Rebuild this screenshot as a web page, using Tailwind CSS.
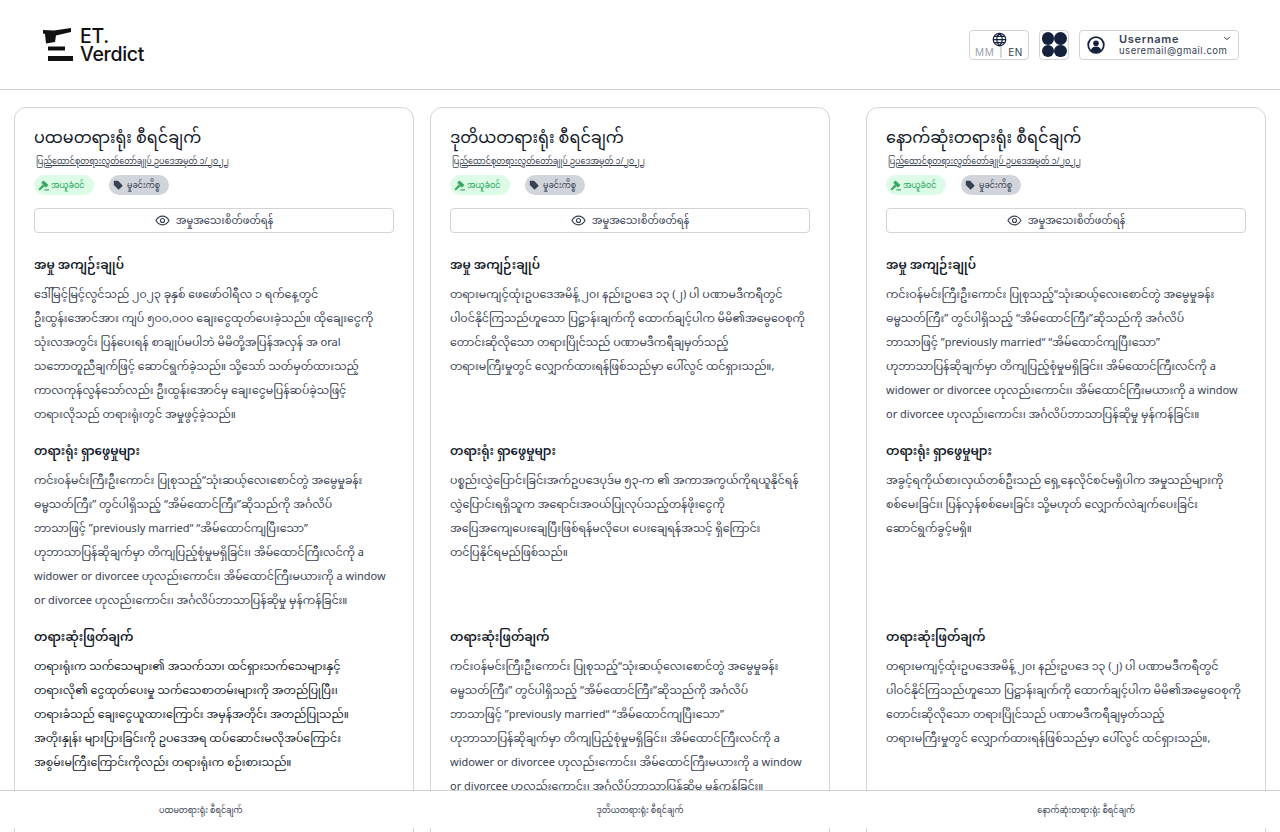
<!DOCTYPE html>
<html lang="my">
<head>
  <meta charset="UTF-8" />
  <meta name="viewport" content="width=device-width, initial-scale=1.0" />
  <title>ET. Verdict</title>
  <script src="https://cdn.jsdelivr.net/npm/@tailwindcss/browser@4"></script>
</head>
<body class="bg-white font-['Noto_Sans','Noto_Sans_Myanmar',sans-serif] text-[#1f2937]">
  <div class="relative h-[832px] w-[1280px] overflow-hidden">

    <!-- Header -->
    <header class="flex h-[90px] items-center justify-between border-b border-[#d4d4d8] pl-[43px] pr-[41px]">
      <div class="flex items-center gap-[7px]">
        <svg width="30" height="34" viewBox="0 0 30 34" fill="#111">
          <path d="M0 2 L11 2.5 L28 0 L28 4 L13 7.5 L12 14 L3 15.5 L2 6 L0 5.5 Z" />
          <rect x="5" y="18.5" width="17" height="4" />
          <rect x="5" y="28" width="25" height="5" />
        </svg>
        <div class="font-['Inter'] text-[19.5px] font-medium leading-[18px] tracking-[-0.3px] text-[#111]">ET.<br>Verdict</div>
      </div>
      <div class="flex items-center gap-[10px]">
        <button class="flex h-[30px] w-[60px] flex-col items-center justify-center rounded-[4px] border border-[#d4d4d8]">
          <svg width="15" height="15" viewBox="0 0 24 24" fill="none" stroke="#14213d" stroke-width="2">
            <circle cx="12" cy="12" r="10" />
            <path d="M2 12h20M3.5 7h17M3.5 17h17M12 2c-6 6-6 14 0 20M12 2c6 6 6 14 0 20" />
          </svg>
          <span class="whitespace-nowrap font-['Inter'] text-[10px] leading-[11px] tracking-[0.6px] text-[#9ca3af]">MM<span class="mx-[5px]">|</span><span class="text-[#374151]">EN</span></span>
        </button>
        <button class="grid h-[30px] w-[30px] grid-cols-[12.5px_12.5px] grid-rows-[12.5px_12.5px] place-content-center rounded-[4px] border border-[#d4d4d8]">
          <span class="rounded-full bg-[#14213d]"></span>
          <span class="rounded-full bg-[#14213d]"></span>
          <span class="rounded-full bg-[#14213d]"></span>
          <span class="rounded-full bg-[#14213d]"></span>
        </button>
        <button class="flex h-[30px] w-[160px] items-center rounded-[4px] border border-[#d4d4d8] pl-[7px] pr-[7px] text-left">
          <svg width="18" height="18" viewBox="0 0 18 18" fill="none">
            <circle cx="9" cy="9" r="7.8" stroke="#14213d" stroke-width="1.8" />
            <circle cx="9" cy="7.2" r="2.8" fill="#14213d" />
            <path d="M3.8 14.2c1-2.6 3-3.6 5.2-3.6s4.2 1 5.2 3.6c-1.4 1.3-3.2 2-5.2 2s-3.8-.7-5.2-2z" fill="#14213d" />
          </svg>
          <div class="ml-[14px] flex-1 font-['Inter'] text-[#374151]">
            <div class="flex items-center justify-between text-[11px] font-semibold leading-[12px] tracking-[0.7px]">
              Username
              <svg width="8" height="5" viewBox="0 0 8 5" fill="none" stroke="#4b5563" stroke-width="1"><path d="M1 1l3 2.5L7 1" /></svg>
            </div>
            <div class="text-[9.5px] leading-[12px] tracking-[0.5px]">useremail@gmail.com</div>
          </div>
        </button>
      </div>
    </header>

    <!-- Cards -->
    <main class="flex items-start pl-[14px] pt-[17px]">

      <article class="h-[800px] w-[400px] shrink-0 rounded-xl border border-[#d4d4d8] px-[19px] pt-[13px]">
        <h2 class="text-[16px] leading-[32px] text-[#111827]">ပထမတရားရုံး စီရင်ချက်</h2>
        <a class="block pl-[2px] text-[8px] leading-[16px] text-[#374151] underline">ပြည်ထောင်စုတရားလွှတ်တော်ချုပ် ဥပဒေအမှတ် ၁/၂၀၂၂</a>
        <div class="mt-[6px] flex gap-[15px]">
          <span class="flex h-[20px] w-[60px] items-center gap-[2px] rounded-full bg-[#dcfce7] pl-[4px] text-[8px] text-[#22a55a]">
            <svg width="11" height="11" viewBox="0 0 12 12" fill="#3aa862"><path d="M6 .5L11.5 5.5 8.5 8.5 3.5 3zM5 5l2 2-5 4.5L.5 10zM7 10h5v1.5H7z" /></svg>
            အယူခံဝင်
          </span>
          <span class="flex h-[20px] w-[60px] items-center gap-[4px] rounded-full bg-[#d1d5db] pl-[4px] text-[8px] text-[#374151]">
            <svg width="10" height="10" viewBox="0 0 12 12" fill="#374151"><path d="M1 1h5l5 5a1 1 0 010 1.4L7.4 11a1 1 0 01-1.4 0L1 6z" /></svg>
            မှုခင်းကိစ္စ
          </span>
        </div>
        <button class="mt-[13px] flex h-[25px] w-full items-center justify-center gap-[6px] rounded-[4px] border border-[#d4d4d8] text-[10px] text-[#374151]">
          <svg width="15" height="15" viewBox="0 0 24 24" fill="none" stroke="#374151" stroke-width="1.8"><path d="M1.5 12S5.5 5 12 5s10.5 7 10.5 7-4 7-10.5 7S1.5 12 1.5 12z" /><circle cx="12" cy="12" r="3.2" /></svg>
          အမှုအသေးစိတ်ဖတ်ရန်
        </button>
        <section class="mt-[18px] h-[186px]">
          <h3 class="text-[12px] font-semibold leading-[28px] text-[#111827]">အမှု အကျဉ်းချုပ်</h3>
          <p class="mt-[3px] whitespace-nowrap text-[11px] leading-[24px] text-[#374151]">ဒေါ်မြင့်မြင့်လွင်သည် ၂၀၂၃ ခုနှစ် ဖေဖော်ဝါရီလ ၁ ရက်နေ့တွင်<br>ဦးထွန်းအောင်အား ကျပ် ၅၀၀,၀၀၀ ချေးငွေထုတ်ပေးခဲ့သည်။ ထိုချေးငွေကို<br>သုံးလအတွင်း ပြန်ပေးရန် စာချုပ်မပါဘဲ မိမိတို့အပြန်အလှန် အ oral<br>သဘောတူညီချက်ဖြင့် ဆောင်ရွက်ခဲ့သည်။ သို့သော် သတ်မှတ်ထားသည့်<br>ကာလကုန်လွန်သော်လည်း ဦးထွန်းအောင်မှ ချေးငွေမပြန်ဆပ်ခဲ့သဖြင့်<br>တရားလိုသည် တရားရုံးတွင် အမှုဖွင့်ခဲ့သည်။</p>
        </section>
        <section class="h-[186px]">
          <h3 class="text-[12px] font-semibold leading-[28px] text-[#111827]">တရားရုံး ရှာဖွေမှုများ</h3>
          <p class="mt-[3px] whitespace-nowrap text-[11px] leading-[24px] text-[#374151]">ကင်းဝန်မင်းကြီးဦးကောင်း ပြုစုသည့်“သုံးဆယ့်လေးစောင်တွဲ အမွေမှုခန်း<br>ဓမ္မသတ်ကြီး” တွင်ပါရှိသည့် “အိမ်ထောင်ကြီး”ဆိုသည်ကို အင်္ဂလိပ်<br>ဘာသာဖြင့် ”previously married“ “အိမ်ထောင်ကျပြီးသော”<br>ဟုဘာသာပြန်ဆိုချက်မှာ တိကျပြည့်စုံမှုမရှိခြင်း၊ အိမ်ထောင်ကြီးလင်ကို a<br>widower or divorcee ဟုလည်းကောင်း၊ အိမ်ထောင်ကြီးမယားကို a window<br>or divorcee ဟုလည်းကောင်း၊ အင်္ဂလိပ်ဘာသာပြန်ဆိုမှု မှန်ကန်ခြင်း။</p>
        </section>
        <section>
          <h3 class="text-[12px] font-semibold leading-[28px] text-[#111827]">တရားဆုံးဖြတ်ချက်</h3>
          <p class="mt-[3px] whitespace-nowrap text-[11px] leading-[24px] text-[#111827]">တရားရုံးက သက်သေများ၏ အသက်သာ၊ ထင်ရှားသက်သေများနှင့်<br>တရားလို၏ ငွေထုတ်ပေးမှု သက်သေစာတမ်းများကို အတည်ပြုပြီး၊<br>တရားခံသည် ချေးငွေယူထားကြောင်း အမှန်အတိုင်း အတည်ပြုသည်။<br>အတိုးနှုန်း များပြားခြင်းကို ဥပဒေအရ ထပ်ဆောင်းမလိုအပ်ကြောင်း<br>အစွမ်းမကြီးကြောင်းကိုလည်း တရားရုံးက စဉ်းစားသည်။</p>
        </section>
      </article>

      <article class="ml-[16px] h-[800px] w-[400px] shrink-0 rounded-xl border border-[#d4d4d8] px-[19px] pt-[13px]">
        <h2 class="text-[16px] leading-[32px] text-[#111827]">ဒုတိယတရားရုံး စီရင်ချက်</h2>
        <a class="block pl-[2px] text-[8px] leading-[16px] text-[#374151] underline">ပြည်ထောင်စုတရားလွှတ်တော်ချုပ် ဥပဒေအမှတ် ၁/၂၀၂၂</a>
        <div class="mt-[6px] flex gap-[15px]">
          <span class="flex h-[20px] w-[60px] items-center gap-[2px] rounded-full bg-[#dcfce7] pl-[4px] text-[8px] text-[#22a55a]">
            <svg width="11" height="11" viewBox="0 0 12 12" fill="#3aa862"><path d="M6 .5L11.5 5.5 8.5 8.5 3.5 3zM5 5l2 2-5 4.5L.5 10zM7 10h5v1.5H7z" /></svg>
            အယူခံဝင်
          </span>
          <span class="flex h-[20px] w-[60px] items-center gap-[4px] rounded-full bg-[#d1d5db] pl-[4px] text-[8px] text-[#374151]">
            <svg width="10" height="10" viewBox="0 0 12 12" fill="#374151"><path d="M1 1h5l5 5a1 1 0 010 1.4L7.4 11a1 1 0 01-1.4 0L1 6z" /></svg>
            မှုခင်းကိစ္စ
          </span>
        </div>
        <button class="mt-[13px] flex h-[25px] w-full items-center justify-center gap-[6px] rounded-[4px] border border-[#d4d4d8] text-[10px] text-[#374151]">
          <svg width="15" height="15" viewBox="0 0 24 24" fill="none" stroke="#374151" stroke-width="1.8"><path d="M1.5 12S5.5 5 12 5s10.5 7 10.5 7-4 7-10.5 7S1.5 12 1.5 12z" /><circle cx="12" cy="12" r="3.2" /></svg>
          အမှုအသေးစိတ်ဖတ်ရန်
        </button>
        <section class="mt-[18px] h-[186px]">
          <h3 class="text-[12px] font-semibold leading-[28px] text-[#111827]">အမှု အကျဉ်းချုပ်</h3>
          <p class="mt-[3px] whitespace-nowrap text-[11px] leading-[24px] text-[#374151]">တရားမကျင့်ထုံးဥပဒေအမိန့် ၂၀၊ နည်းဥပဒေ ၁၃ (၂) ပါ ပဏာမဒီကရီတွင်<br>ပါဝင်နိုင်ကြသည်ဟူသော ပြဋ္ဌာန်းချက်ကို ထောက်ချင့်ပါက မိမိ၏အမွေဝေစုကို<br>တောင်းဆိုလိုသော တရားပြိုင်သည် ပဏာမဒီကရီချမှတ်သည့်<br>တရားမကြီးမှုတွင် လျှောက်ထားရန်ဖြစ်သည်မှာ ပေါ်လွင် ထင်ရှားသည်။,</p>
        </section>
        <section class="h-[186px]">
          <h3 class="text-[12px] font-semibold leading-[28px] text-[#111827]">တရားရုံး ရှာဖွေမှုများ</h3>
          <p class="mt-[3px] whitespace-nowrap text-[11px] leading-[24px] text-[#374151]">ပစ္စည်းလွှဲပြောင်းခြင်းအက်ဥပဒေပုဒ်မ ၅၃-က ၏ အကာအကွယ်ကိုရယူနိုင်ရန်<br>လွှဲပြောင်းရရှိသူက အရောင်းအဝယ်ပြုလုပ်သည့်တန်ဖိုးငွေကို<br>အပြေအကျေပေးချေပြီးဖြစ်ရန်မလိုပေ၊ ပေးချေရန်အသင့် ရှိကြောင်း<br>တင်ပြနိုင်ရမည်ဖြစ်သည်။</p>
        </section>
        <section>
          <h3 class="text-[12px] font-semibold leading-[28px] text-[#111827]">တရားဆုံးဖြတ်ချက်</h3>
          <p class="mt-[3px] whitespace-nowrap text-[11px] leading-[24px] text-[#374151]">ကင်းဝန်မင်းကြီးဦးကောင်း ပြုစုသည့်“သုံးဆယ့်လေးစောင်တွဲ အမွေမှုခန်း<br>ဓမ္မသတ်ကြီး” တွင်ပါရှိသည့် “အိမ်ထောင်ကြီး”ဆိုသည်ကို အင်္ဂလိပ်<br>ဘာသာဖြင့် ”previously married“ “အိမ်ထောင်ကျပြီးသော”<br>ဟုဘာသာပြန်ဆိုချက်မှာ တိကျပြည့်စုံမှုမရှိခြင်း၊ အိမ်ထောင်ကြီးလင်ကို a<br>widower or divorcee ဟုလည်းကောင်း၊ အိမ်ထောင်ကြီးမယားကို a window<br>or divorcee ဟုလည်းကောင်း၊ အင်္ဂလိပ်ဘာသာပြန်ဆိုမှု မှန်ကန်ခြင်း။</p>
        </section>
      </article>

      <article class="ml-[36px] h-[800px] w-[400px] shrink-0 rounded-xl border border-[#d4d4d8] px-[19px] pt-[13px]">
        <h2 class="text-[16px] leading-[32px] text-[#111827]">နောက်ဆုံးတရားရုံး စီရင်ချက်</h2>
        <a class="block pl-[2px] text-[8px] leading-[16px] text-[#374151] underline">ပြည်ထောင်စုတရားလွှတ်တော်ချုပ် ဥပဒေအမှတ် ၁/၂၀၂၂</a>
        <div class="mt-[6px] flex gap-[15px]">
          <span class="flex h-[20px] w-[60px] items-center gap-[2px] rounded-full bg-[#dcfce7] pl-[4px] text-[8px] text-[#22a55a]">
            <svg width="11" height="11" viewBox="0 0 12 12" fill="#3aa862"><path d="M6 .5L11.5 5.5 8.5 8.5 3.5 3zM5 5l2 2-5 4.5L.5 10zM7 10h5v1.5H7z" /></svg>
            အယူခံဝင်
          </span>
          <span class="flex h-[20px] w-[60px] items-center gap-[4px] rounded-full bg-[#d1d5db] pl-[4px] text-[8px] text-[#374151]">
            <svg width="10" height="10" viewBox="0 0 12 12" fill="#374151"><path d="M1 1h5l5 5a1 1 0 010 1.4L7.4 11a1 1 0 01-1.4 0L1 6z" /></svg>
            မှုခင်းကိစ္စ
          </span>
        </div>
        <button class="mt-[13px] flex h-[25px] w-full items-center justify-center gap-[6px] rounded-[4px] border border-[#d4d4d8] text-[10px] text-[#374151]">
          <svg width="15" height="15" viewBox="0 0 24 24" fill="none" stroke="#374151" stroke-width="1.8"><path d="M1.5 12S5.5 5 12 5s10.5 7 10.5 7-4 7-10.5 7S1.5 12 1.5 12z" /><circle cx="12" cy="12" r="3.2" /></svg>
          အမှုအသေးစိတ်ဖတ်ရန်
        </button>
        <section class="mt-[18px] h-[186px]">
          <h3 class="text-[12px] font-semibold leading-[28px] text-[#111827]">အမှု အကျဉ်းချုပ်</h3>
          <p class="mt-[3px] whitespace-nowrap text-[11px] leading-[24px] text-[#374151]">ကင်းဝန်မင်းကြီးဦးကောင်း ပြုစုသည့်“သုံးဆယ့်လေးစောင်တွဲ အမွေမှုခန်း<br>ဓမ္မသတ်ကြီး” တွင်ပါရှိသည့် “အိမ်ထောင်ကြီး”ဆိုသည်ကို အင်္ဂလိပ်<br>ဘာသာဖြင့် ”previously married“ “အိမ်ထောင်ကျပြီးသော”<br>ဟုဘာသာပြန်ဆိုချက်မှာ တိကျပြည့်စုံမှုမရှိခြင်း၊ အိမ်ထောင်ကြီးလင်ကို a<br>widower or divorcee ဟုလည်းကောင်း၊ အိမ်ထောင်ကြီးမယားကို a window<br>or divorcee ဟုလည်းကောင်း၊ အင်္ဂလိပ်ဘာသာပြန်ဆိုမှု မှန်ကန်ခြင်း။</p>
        </section>
        <section class="h-[186px]">
          <h3 class="text-[12px] font-semibold leading-[28px] text-[#111827]">တရားရုံး ရှာဖွေမှုများ</h3>
          <p class="mt-[3px] whitespace-nowrap text-[11px] leading-[24px] text-[#374151]">အခွင့်ရကိုယ်စားလှယ်တစ်ဦးသည် ရှေ့နေလိုင်စင်မရှိပါက အမှုသည်များကို<br>စစ်မေးခြင်း၊ ပြန်လှန်စစ်မေးခြင်း သို့မဟုတ် လျှောက်လဲချက်ပေးခြင်း<br>ဆောင်ရွက်ခွင့်မရှိ။</p>
        </section>
        <section>
          <h3 class="text-[12px] font-semibold leading-[28px] text-[#111827]">တရားဆုံးဖြတ်ချက်</h3>
          <p class="mt-[3px] whitespace-nowrap text-[11px] leading-[24px] text-[#374151]">တရားမကျင့်ထုံးဥပဒေအမိန့် ၂၀၊ နည်းဥပဒေ ၁၃ (၂) ပါ ပဏာမဒီကရီတွင်<br>ပါဝင်နိုင်ကြသည်ဟူသော ပြဋ္ဌာန်းချက်ကို ထောက်ချင့်ပါက မိမိ၏အမွေဝေစုကို<br>တောင်းဆိုလိုသော တရားပြိုင်သည် ပဏာမဒီကရီချမှတ်သည့်<br>တရားမကြီးမှုတွင် လျှောက်ထားရန်ဖြစ်သည်မှာ ပေါ်လွင် ထင်ရှားသည်။,</p>
        </section>
      </article>
    </main>

    <!-- Footer tabs sit over the cards -->
    <footer class="absolute inset-x-0 top-[790px] flex h-[38px] items-center justify-between border-t border-[#d4d4d8] bg-white pl-[159px] pr-[145px] pt-[1px] text-[8px] text-[#374151]">
      <span>ပထမတရားရုံး စီရင်ချက်</span>
      <span>ဒုတိယတရားရုံး စီရင်ချက်</span>
      <span>နောက်ဆုံးတရားရုံး စီရင်ချက်</span>
    </footer>
  </div>
</body>
</html>
